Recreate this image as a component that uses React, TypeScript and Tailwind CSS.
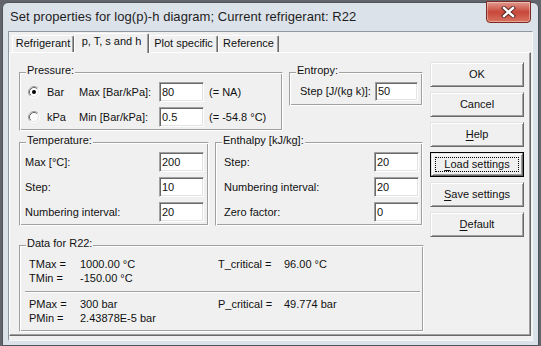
import React from "react";

const inputCls =
  "flex items-center bg-white pl-[2px] border border-t-[#a0a0a0] border-l-[#a0a0a0] border-r-white border-b-white shadow-[inset_1px_1px_0_#696969,inset_-1px_-1px_0_#e3e3e3]";

function Field({ value, size = "h-[20px] w-[45px]" }: { value: string; size?: string }) {
  return <div className={`${inputCls} ${size}`}>{value}</div>;
}

function Group({
  label,
  className,
  children,
}: {
  label: string;
  className: string;
  children?: React.ReactNode;
}) {
  return (
    <div
      className={`relative border border-t-[#a0a0a0] border-l-[#a0a0a0] border-r-white border-b-white shadow-[inset_1px_1px_0_#fff,inset_-1px_-1px_0_#a0a0a0] ${className}`}
    >
      <span className="absolute left-[6px] top-[-9px] bg-[#f0f0f0] px-px leading-[13px]">{label}</span>
      {children}
    </div>
  );
}

function Radio({ on }: { on?: boolean }) {
  return (
    <svg width="12" height="12" viewBox="0 0 12 12" className="shrink-0">
      <circle cx="6" cy="6" r="5" fill="#fff" />
      <path d="M2.11 9.89A5.5 5.5 0 0 1 9.89 2.11" fill="none" stroke="#a0a0a0" />
      <path d="M9.89 2.11A5.5 5.5 0 0 1 2.11 9.89" fill="none" stroke="#fff" />
      <path d="M2.82 9.18A4.5 4.5 0 0 1 9.18 2.82" fill="none" stroke="#696969" />
      <path d="M9.18 2.82A4.5 4.5 0 0 1 2.82 9.18" fill="none" stroke="#e3e3e3" />
      {on && <circle cx="6" cy="6" r="2" fill="#000" />}
    </svg>
  );
}

function Btn({ children, focus }: { children: React.ReactNode; focus?: boolean }) {
  return (
    <div className={`h-[25px] w-[94px] ${focus ? "border border-black" : ""}`}>
      <div className="relative flex h-full w-full items-center justify-center border border-t-[#e3e3e3] border-l-[#e3e3e3] border-r-[#696969] border-b-[#696969] shadow-[inset_1px_1px_0_#fff,inset_-1px_-1px_0_#a0a0a0]">
        {focus && <div className="absolute inset-[3px] border border-dotted border-black" />}
        <span className="leading-[13px]">{children}</span>
      </div>
    </div>
  );
}

function U({ children }: { children: string }) {
  return <span className="underline underline-offset-[2px]">{children}</span>;
}

function DataRow({ a, b, c, d }: { a: string; b: string; c?: string; d?: string }) {
  return (
    <div className="flex h-[14px] items-center leading-[14px]">
      <span className="w-[51px]">{a}</span>
      <span className="w-[138px]">{b}</span>
      {c && <span className="w-[66px]">{c}</span>}
      {d && <span>{d}</span>}
    </div>
  );
}

function LabeledField({ label, value, labelW }: { label: string; value: string; labelW: string }) {
  return (
    <div className="flex items-center">
      <span className={labelW}>{label}</span>
      <Field value={value} />
    </div>
  );
}

const tabs = [
  { label: "Refrigerant", w: "w-[62px]" },
  { label: "p, T, s and h", w: "w-[75px]", active: true },
  { label: "Plot specific", w: "w-[69px]" },
  { label: "Reference", w: "w-[61px]" },
];

export default function App() {
  return (
    <div className="h-[346px] w-[541px] overflow-hidden bg-[#62666c] pt-[2px] pl-[2px] font-['Liberation_Sans',Arial,sans-serif] text-[11px] text-[#111]">
      <div className="relative h-[344px] w-[537px] rounded-t-[6px] border border-[#4c535b] bg-[#dce2e9]">
        {/* title bar */}
        <div className="flex h-[28px] items-center pl-[7px] text-[13px] leading-[16px] tracking-[0.05px] text-[#1e1e1e]">
          Set properties for log(p)-h diagram; Current refrigerant: R22
        </div>
        <div className="absolute right-[7px] top-[-2px] flex h-[22px] w-[45px] items-center justify-center rounded-b-[4px] border border-[#7c2b22] bg-gradient-to-b from-[#e09a8e] via-[#c8463a] to-[#d8725f] shadow-[inset_0_0_0_1px_rgba(255,255,255,0.35)]">
          <svg width="15" height="12" viewBox="0 0 15 12">
            <path d="M3 2L12 10M12 2L3 10" stroke="#4a2320" strokeWidth="4.2" strokeLinecap="square" />
            <path d="M3 2L12 10M12 2L3 10" stroke="#fff" strokeWidth="2.4" strokeLinecap="square" />
          </svg>
        </div>

        {/* client area */}
        <div className="ml-[5px] h-[310px] w-[525px] border border-t-[#8e98a3] border-l-[#8e98a3] border-r-[#f4f6f8] border-b-[#f4f6f8] bg-[#f0f0f0]">
          {/* tab strip */}
          <div className="flex h-[20px] items-start pl-[3px]">
            {tabs.map((t) =>
              t.active ? (
                <div
                  key={t.label}
                  className={`relative z-10 mt-px h-[20px] ${t.w} rounded-t-[2px] border-t border-l border-r border-t-white border-l-white border-r-[#696969] bg-[#f0f0f0] pt-px text-center leading-[13px] shadow-[inset_-1px_0_0_#a0a0a0]`}
                >
                  {t.label}
                </div>
              ) : (
                <div
                  key={t.label}
                  className={`mt-[3px] h-[17px] ${t.w} rounded-t-[2px] border-t border-l border-r border-t-white border-l-white border-r-[#696969] pt-px text-center leading-[13px] shadow-[inset_-1px_0_0_#a0a0a0]`}
                >
                  {t.label}
                </div>
              )
            )}
          </div>

          {/* tab page */}
          <div className="flex h-[284px] w-[522px] items-start border border-t-white border-l-white border-r-[#696969] border-b-[#696969] pl-[9px] shadow-[inset_-1px_-1px_0_#a0a0a0]">
            <div className="mt-[19px] flex w-[404px] flex-col">
              <div className="flex items-start gap-[6px]">
                <Group label="Pressure:" className="h-[59px] w-[264px]">
                  <div className="flex flex-col gap-[5px] pl-[8px] pt-[9px]">
                    <div className="flex items-center">
                      <Radio on />
                      <span className="ml-[7px] w-[32px]">Bar</span>
                      <span className="w-[80px]">Max [Bar/kPa]:</span>
                      <Field value="80" />
                      <span className="ml-[5px]">(= NA)</span>
                    </div>
                    <div className="flex items-center">
                      <Radio />
                      <span className="ml-[7px] w-[32px]">kPa</span>
                      <span className="w-[80px]">Min [Bar/kPa]:</span>
                      <Field value="0.5" />
                      <span className="ml-[5px]">(= -54.8 °C)</span>
                    </div>
                  </div>
                </Group>
                <Group label="Entropy:" className="h-[34px] w-[134px]">
                  <div className="flex items-center pl-[10px] pt-[9px]">
                    <span className="w-[75px]">Step [J/(kg k)]:</span>
                    <Field value="50" size="h-[19px] w-[43px]" />
                  </div>
                </Group>
              </div>

              <div className="mt-[11px] flex items-start gap-[6px]">
                <Group label="Temperature:" className="h-[84px] w-[190px]">
                  <div className="flex flex-col gap-[5px] pl-[5px] pt-[9px]">
                    <LabeledField label="Max [°C]:" value="200" labelW="w-[134px]" />
                    <LabeledField label="Step:" value="10" labelW="w-[134px]" />
                    <LabeledField label="Numbering interval:" value="20" labelW="w-[134px]" />
                  </div>
                </Group>
                <Group label="Enthalpy [kJ/kg]:" className="h-[84px] w-[208px]">
                  <div className="flex flex-col gap-[5px] pl-[8px] pt-[9px]">
                    <LabeledField label="Step:" value="20" labelW="w-[150px]" />
                    <LabeledField label="Numbering interval:" value="20" labelW="w-[150px]" />
                    <LabeledField label="Zero factor:" value="0" labelW="w-[150px]" />
                  </div>
                </Group>
              </div>

              <Group label="Data for R22:" className="mt-[19px] h-[87px] w-[405px]">
                <div className="pl-[9px] pt-[11px]">
                  <DataRow a="TMax =" b="1000.00 °C" c="T_critical =" d="96.00 °C" />
                  <DataRow a="TMin =" b="-150.00 °C" />
                </div>
                <div className="ml-[5px] mr-[3px] mt-[6px] h-[2px] border-t border-b border-t-[#a0a0a0] border-b-white" />
                <div className="pl-[9px] pt-[4px]">
                  <DataRow a="PMax =" b="300 bar" c="P_critical =" d="49.774 bar" />
                  <DataRow a="PMin =" b="2.43878E-5 bar" />
                </div>
              </Group>
            </div>

            <div className="ml-[7px] mt-[9px] flex flex-col gap-[5px]">
              <Btn>OK</Btn>
              <Btn>Cancel</Btn>
              <Btn>
                <U>H</U>elp
              </Btn>
              <Btn focus>
                <U>L</U>oad settings
              </Btn>
              <Btn>
                <U>S</U>ave settings
              </Btn>
              <Btn>
                <U>D</U>efault
              </Btn>
            </div>
          </div>
        </div>
      </div>
    </div>
  );
}
